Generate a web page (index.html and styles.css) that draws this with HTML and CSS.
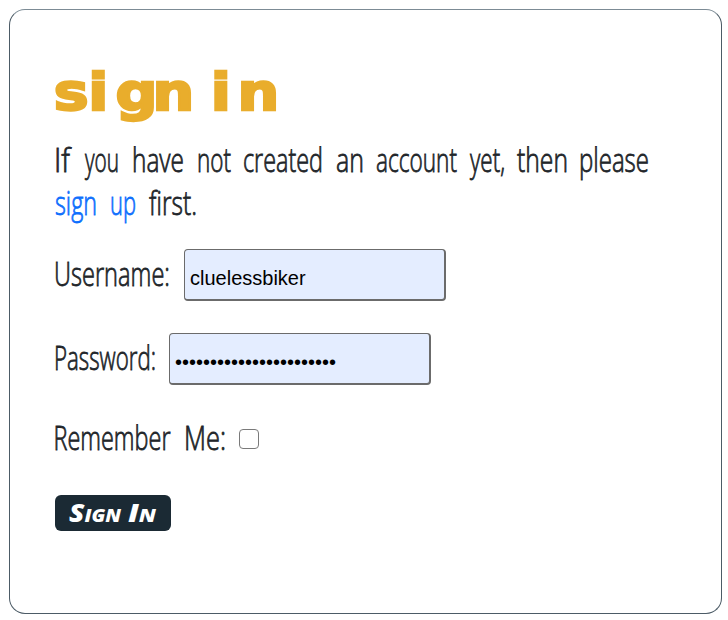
FILE: index.html
```html
<!DOCTYPE html>
<html lang="en">
<head>
<meta charset="utf-8">
<title>Sign in</title>
<link rel="stylesheet" href="styles.css">
</head>
<body>
<main class="card">
  <h1 class="title"><svg class="lettering" width="222" height="56"><text class="display" transform="scale(1.15 1)" y="43.8" x="-1 29 52.7 84.8 120 135.5 158.7">sign in</text></svg></h1>
  <p class="intro">
    <svg class="lettering hand" width="594" height="43">
      <text x="-1" y="32.5" textLength="16" lengthAdjust="spacingAndGlyphs">If</text>
      <text x="30" y="32.5" textLength="34" lengthAdjust="spacingAndGlyphs">you</text>
      <text x="77" y="32.5" textLength="52" lengthAdjust="spacingAndGlyphs">have</text>
      <text x="142" y="32.5" textLength="34" lengthAdjust="spacingAndGlyphs">not</text>
      <text x="188" y="32.5" textLength="80" lengthAdjust="spacingAndGlyphs">created</text>
      <text x="281" y="32.5" textLength="28" lengthAdjust="spacingAndGlyphs">an</text>
      <text x="321" y="32.5" textLength="81" lengthAdjust="spacingAndGlyphs">account</text>
      <text x="415" y="32.5" textLength="35" lengthAdjust="spacingAndGlyphs">yet,</text>
      <text x="462" y="32.5" textLength="51" lengthAdjust="spacingAndGlyphs">then</text>
      <text x="524" y="32.5" textLength="70" lengthAdjust="spacingAndGlyphs">please</text>
    </svg>
    <svg class="lettering hand" width="594" height="43">
      <a class="link" href="#">
        <text x="0" y="32.5" textLength="42" lengthAdjust="spacingAndGlyphs">sign</text>
        <text x="55" y="32.5" textLength="26" lengthAdjust="spacingAndGlyphs">up</text>
      </a>
      <text x="94" y="32.5" textLength="48" lengthAdjust="spacingAndGlyphs">first.</text>
    </svg>
  </p>
  <form class="form">
    <div class="row">
      <label for="username"><svg class="lettering hand" width="129" height="52"><text x="-1" y="36.5" textLength="116" lengthAdjust="spacingAndGlyphs">Username:</text></svg></label>
      <input class="field" id="username" type="text" value="cluelessbiker">
    </div>
    <div class="row">
      <label for="password"><svg class="lettering hand" width="114" height="52"><text x="-1" y="36.5" textLength="102" lengthAdjust="spacingAndGlyphs">Password:</text></svg></label>
      <input class="field" id="password" type="password" value="abcdefghijklmnopqrstuvw">
    </div>
    <div class="row remember">
      <label for="remember"><svg class="lettering hand" width="184" height="40"><text x="-1.5" y="32.5" textLength="117" lengthAdjust="spacingAndGlyphs">Remember</text><text x="129" y="32.5" textLength="42" lengthAdjust="spacingAndGlyphs">Me:</text></svg></label>
      <input class="check" id="remember" type="checkbox">
    </div>
    <button class="submit" type="submit"><svg class="lettering marker" width="116" height="36"><text x="14" y="27" textLength="52" lengthAdjust="spacingAndGlyphs">Sign</text><text x="73" y="27" textLength="28" lengthAdjust="spacingAndGlyphs">In</text></svg></button>
  </form>
</main>
</body>
</html>
```
FILE: styles.css
```css
* { box-sizing: border-box; }
body { margin: 0; background: #fff; color: #212529; font-family: "Open Sans", sans-serif; }
.card {
  width: 713px;
  height: 605px;
  margin: 9px 0 0 9px;
  padding: 56px 45px;
  border: 1px solid #4c5b66;
  border-top-color: #7c8b95;
  border-radius: 16px;
}
.lettering { display: block; overflow: visible; }
.title { margin: 0; height: 73px; }
.display {
  font: 700 51px "DejaVu Sans", sans-serif;
  fill: #e9ad2c;
  stroke: #e9ad2c;
  stroke-width: 2.4px;
}
.hand {
  font: 300 33px "Open Sans", sans-serif;
  fill: #212529;
  stroke: #212529;
  stroke-width: .8px;
}
.intro { margin: 0; height: 110px; }
.link { fill: #0d6efd; stroke: #0d6efd; }
.row { display: flex; align-items: flex-start; height: 52px; margin-bottom: 32px; }
.field {
  width: 262px;
  height: 52px;
  margin: 0;
  padding: 8px 4px 0 5px;
  border: 1px solid #6b6b6b;
  border-right-width: 2px;
  border-bottom-width: 2px;
  border-radius: 4px;
  background: #e4edff;
  color: #000;
  font: 20px "Liberation Sans", sans-serif;
}
.remember { height: 40px; margin-bottom: 38px; }
.check {
  appearance: none;
  width: 20px;
  height: 20px;
  margin: 12px 0 0;
  border: 1.5px solid #7a7a7a;
  border-radius: 4px;
  background: #fff;
}
.submit {
  display: block;
  width: 116px;
  height: 36px;
  padding: 0;
  border: 0;
  border-radius: 6px;
  background: #1b2a34;
}
.marker {
  font: italic 800 24px "Open Sans", sans-serif;
  font-variant-caps: small-caps;
  fill: #fff;
}
```
